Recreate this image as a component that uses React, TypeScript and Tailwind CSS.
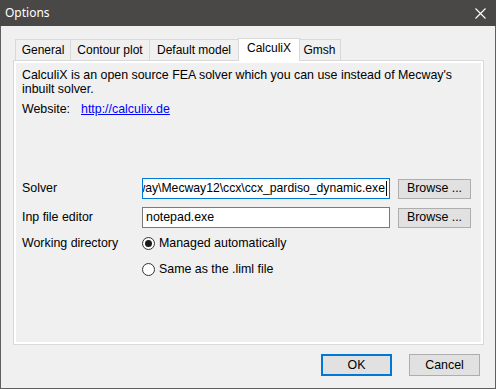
import React from "react";

const font = { fontFamily: '"Liberation Sans", Arial, sans-serif' };

function Tab({ label, w, selected }: { label: string; w: number; selected?: boolean }) {
  if (selected) {
    return (
      <div
        className="relative z-10 -mb-px flex h-[23px] justify-center border border-b-0 border-[#d9d9d9] bg-white pt-[2px] leading-[14px] -ml-px -mr-px"
        style={{ width: w }}
      >
        {label}
      </div>
    );
  }
  return (
    <div
      className="flex h-[21px] justify-center border border-b-0 border-[#d9d9d9] bg-[#f0f0f0] pt-[3px] leading-[14px] -ml-px first:ml-0"
      style={{ width: w }}
    >
      {label}
    </div>
  );
}

function Radio({ checked, label }: { checked?: boolean; label: string }) {
  return (
    <div className="flex h-[16px] items-center">
      <div className="flex h-[13px] w-[13px] items-center justify-center rounded-full border border-[#333333] bg-white">
        {checked && <div className="h-[7px] w-[7px] rounded-full bg-[#1a1a1a]" />}
      </div>
      <span className="ml-[4px] leading-[14px]">{label}</span>
    </div>
  );
}

export default function App() {
  return (
    <div className="flex h-[389px] w-[496px] flex-col text-[12px] text-black" style={font}>
      <div className="flex h-[26px] shrink-0 items-center justify-between bg-[#4a4846] pl-[5px] pr-[10px]">
        <span className="text-[12px] text-white" style={{ fontFamily: '"Noto Sans", "Open Sans", sans-serif' }}>
          Options
        </span>
        <svg width="11" height="11" viewBox="0 0 11 11">
          <path d="M0.5 0.5 L10.5 10.5 M10.5 0.5 L0.5 10.5" stroke="#ffffff" strokeWidth="1.1" />
        </svg>
      </div>
      <div className="flex flex-1 flex-col border-x border-b border-[#5f5f5f] bg-[#f0f0f0] pl-[12px] pt-[12px]">
        <div className="flex h-[22px] items-end pl-[2px]">
          <Tab label="General" w={56} />
          <Tab label="Contour plot" w={80} />
          <Tab label="Default model" w={90} />
          <Tab label="CalculiX" w={62} selected />
          <Tab label="Gmsh" w={43} />
        </div>
        <div className="h-[285px] w-[471px] border border-[#d9d9d9] bg-white p-[2px]">
          <div className="flex h-full flex-col bg-[#f0f0f0] pl-[6px] text-[12.4px]">
            <p className="mt-[5px] whitespace-nowrap leading-[14px]">
              CalculiX is an open source FEA solver which you can use instead of Mecway's
              <br />
              inbuilt solver.
            </p>
            <div className="mt-[6px] flex leading-[14px]">
              <span className="w-[59px]">Website:</span>
              <span className="text-[#0000ff] underline">http://calculix.de</span>
            </div>
            <div className="mt-[62px] flex h-[21px] items-center">
              <span className="w-[120px]">Solver</span>
              <div className="flex h-[21px] w-[248px] items-center justify-end overflow-hidden whitespace-nowrap border border-[#0078d7] bg-white pr-[2px] text-[12.2px]">
                <span className="shrink-0">way\Mecway12\ccx\ccx_pardiso_dynamic.exe</span>
                <span className="ml-[1px] h-[15px] w-[1px] shrink-0 bg-black" />
              </div>
              <div className="ml-[8px] flex h-[20px] w-[73px] items-center justify-center border border-[#adadad] bg-[#e1e1e1]">
                Browse ...
              </div>
            </div>
            <div className="mt-[8px] flex h-[21px] items-center">
              <span className="w-[120px]">Inp file editor</span>
              <div className="flex h-[21px] w-[248px] items-center overflow-hidden whitespace-nowrap border border-[#7a7a7a] bg-white pl-[3px]">
                notepad.exe
              </div>
              <div className="ml-[8px] flex h-[20px] w-[73px] items-center justify-center border border-[#adadad] bg-[#e1e1e1]">
                Browse ...
              </div>
            </div>
            <div className="mt-[7px] flex">
              <span className="w-[120px] leading-[16px]">Working directory</span>
              <div className="flex flex-col gap-[10px]">
                <Radio checked label="Managed automatically" />
                <Radio label="Same as the .liml file" />
              </div>
            </div>
          </div>
        </div>
        <div className="mt-[9px] flex justify-end gap-[17px] pr-[15px] text-[12.4px]">
          <div className="flex h-[22px] w-[71px] items-center justify-center border-2 border-[#0078d7] bg-[#e1e1e1]">
            OK
          </div>
          <div className="flex h-[22px] w-[71px] items-center justify-center border border-[#adadad] bg-[#e1e1e1]">
            Cancel
          </div>
        </div>
      </div>
    </div>
  );
}
